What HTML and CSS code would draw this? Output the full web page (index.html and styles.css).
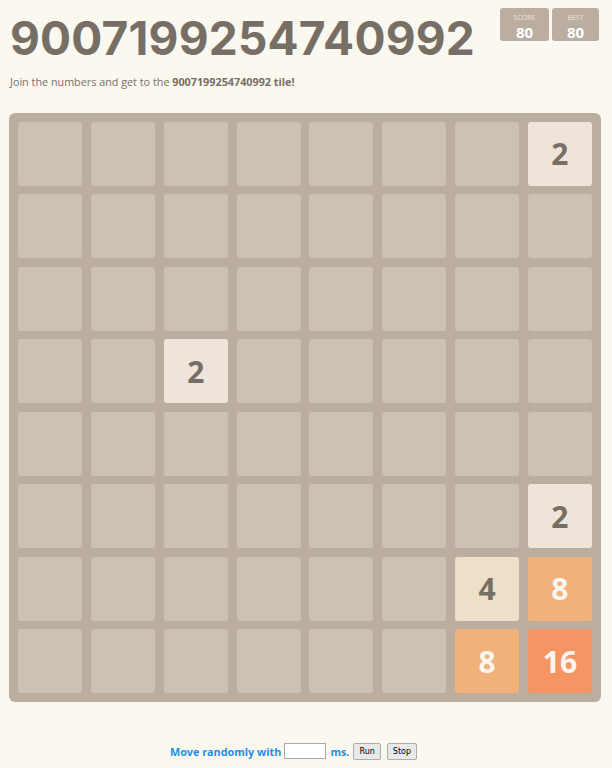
FILE: index.html
```html
<!DOCTYPE html>
<html>
<head>
<meta charset="utf-8">
<link rel="stylesheet" href="styles.css">
</head>
<body>
<div class="container">
  <div class="heading">
    <h1 class="title">9007199254740992</h1>
    <div class="scores">
      <div class="score-box score"><span class="label">SCORE</span><span class="value">80</span></div>
      <div class="score-box best"><span class="label">BEST</span><span class="value">80</span></div>
    </div>
  </div>
  <p class="intro">Join the numbers and get to the <strong>9007199254740992 tile!</strong></p>
  <div class="board">
    <div class="cell"></div><div class="cell"></div><div class="cell"></div><div class="cell"></div><div class="cell"></div><div class="cell"></div><div class="cell"></div><div class="cell t2">2</div>
    <div class="cell"></div><div class="cell"></div><div class="cell"></div><div class="cell"></div><div class="cell"></div><div class="cell"></div><div class="cell"></div><div class="cell"></div>
    <div class="cell"></div><div class="cell"></div><div class="cell"></div><div class="cell"></div><div class="cell"></div><div class="cell"></div><div class="cell"></div><div class="cell"></div>
    <div class="cell"></div><div class="cell"></div><div class="cell t2">2</div><div class="cell"></div><div class="cell"></div><div class="cell"></div><div class="cell"></div><div class="cell"></div>
    <div class="cell"></div><div class="cell"></div><div class="cell"></div><div class="cell"></div><div class="cell"></div><div class="cell"></div><div class="cell"></div><div class="cell"></div>
    <div class="cell"></div><div class="cell"></div><div class="cell"></div><div class="cell"></div><div class="cell"></div><div class="cell"></div><div class="cell"></div><div class="cell t2">2</div>
    <div class="cell"></div><div class="cell"></div><div class="cell"></div><div class="cell"></div><div class="cell"></div><div class="cell"></div><div class="cell t4">4</div><div class="cell t8">8</div>
    <div class="cell"></div><div class="cell"></div><div class="cell"></div><div class="cell"></div><div class="cell"></div><div class="cell"></div><div class="cell t8">8</div><div class="cell t16">16</div>
  </div>
  <div class="controls">
    <span class="move-label">Move randomly with</span>
    <input class="ms-input" type="text">
    <span class="move-label">ms.</span>
    <button class="btn">Run</button>
    <button class="btn">Stop</button>
  </div>
</div>
</body>
</html>
```
FILE: styles.css
```css
html, body {
  margin: 0;
  padding: 0;
  background: #faf8ef;
}
body {
  font-family: "Open Sans", "Liberation Sans", sans-serif;
  color: #776e65;
}
.container {
  width: 612px;
  padding: 0 13px 0 9px;
  box-sizing: border-box;
}
.heading {
  display: flex;
  justify-content: space-between;
  align-items: flex-start;
}
.title {
  margin: 12px 0 0 1px;
  font-family: "Inter", "Open Sans", sans-serif;
  font-weight: 700;
  font-size: 46px;
  line-height: 52px;
  letter-spacing: 0.2px;
  color: #776e65;
}
.scores {
  display: flex;
  gap: 3px;
  margin-top: 8px;
}
.score-box {
  background: #bbada0;
  border-radius: 3px;
  height: 33px;
  display: flex;
  flex-direction: column;
  align-items: center;
  box-sizing: border-box;
  padding-top: 5px;
}
.score { width: 49px; }
.best { width: 47px; }
.label {
  font-size: 7px;
  line-height: 10px;
  height: 10px;
  color: #eee4da;
}
.value {
  font-size: 15px;
  line-height: 18px;
  height: 18px;
  font-weight: 700;
  color: #ffffff;
}
.intro {
  margin: 11px 0 0 1px;
  font-size: 10.8px;
  line-height: 14px;
  color: #776e65;
}
.intro strong { font-weight: 700; }
.board {
  margin-top: 24px;
  width: 592px;
  height: 589px;
  box-sizing: border-box;
  padding: 9px;
  background: #bbada0;
  border-radius: 6px;
  display: grid;
  grid-template-columns: repeat(8, 1fr);
  grid-template-rows: repeat(8, 1fr);
  gap: 8.7px;
}
.cell {
  background: #cdc1b4;
  border-radius: 3px;
  display: flex;
  align-items: center;
  justify-content: center;
  font-family: "Open Sans", "Liberation Sans", sans-serif;
  font-weight: 700;
  font-size: 30px;
  color: #776e65;
}
.t2 { background: #eee4da; }
.t4 { background: #ede0c8; }
.t8 { background: #f2b179; color: #f9f6f2; }
.t16 { background: #f59563; color: #f9f6f2; }
.controls {
  margin-top: 40px;
  display: flex;
  align-items: center;
  padding-left: 161px;
  height: 18px;
}
.move-label {
  font-family: "Open Sans", sans-serif;
  font-weight: 700;
  font-size: 10.8px;
  color: #1e90e8;
}
.ms-input {
  width: 42px;
  height: 16px;
  box-sizing: border-box;
  margin: 0 4px 0 3px;
  border: 1px solid #a9a9a9;
  padding: 0;
  background: #fff;
}
.btn {
  height: 17px;
  box-sizing: border-box;
  padding: 0 5px;
  margin-left: 4px;
  font-family: "DejaVu Sans", sans-serif;
  font-size: 8px;
  border: 1px solid #adadad;
  border-radius: 2px;
  background: #e9e9e9;
  color: #000;
}
.btn + .btn { margin-left: 6px; }
```
